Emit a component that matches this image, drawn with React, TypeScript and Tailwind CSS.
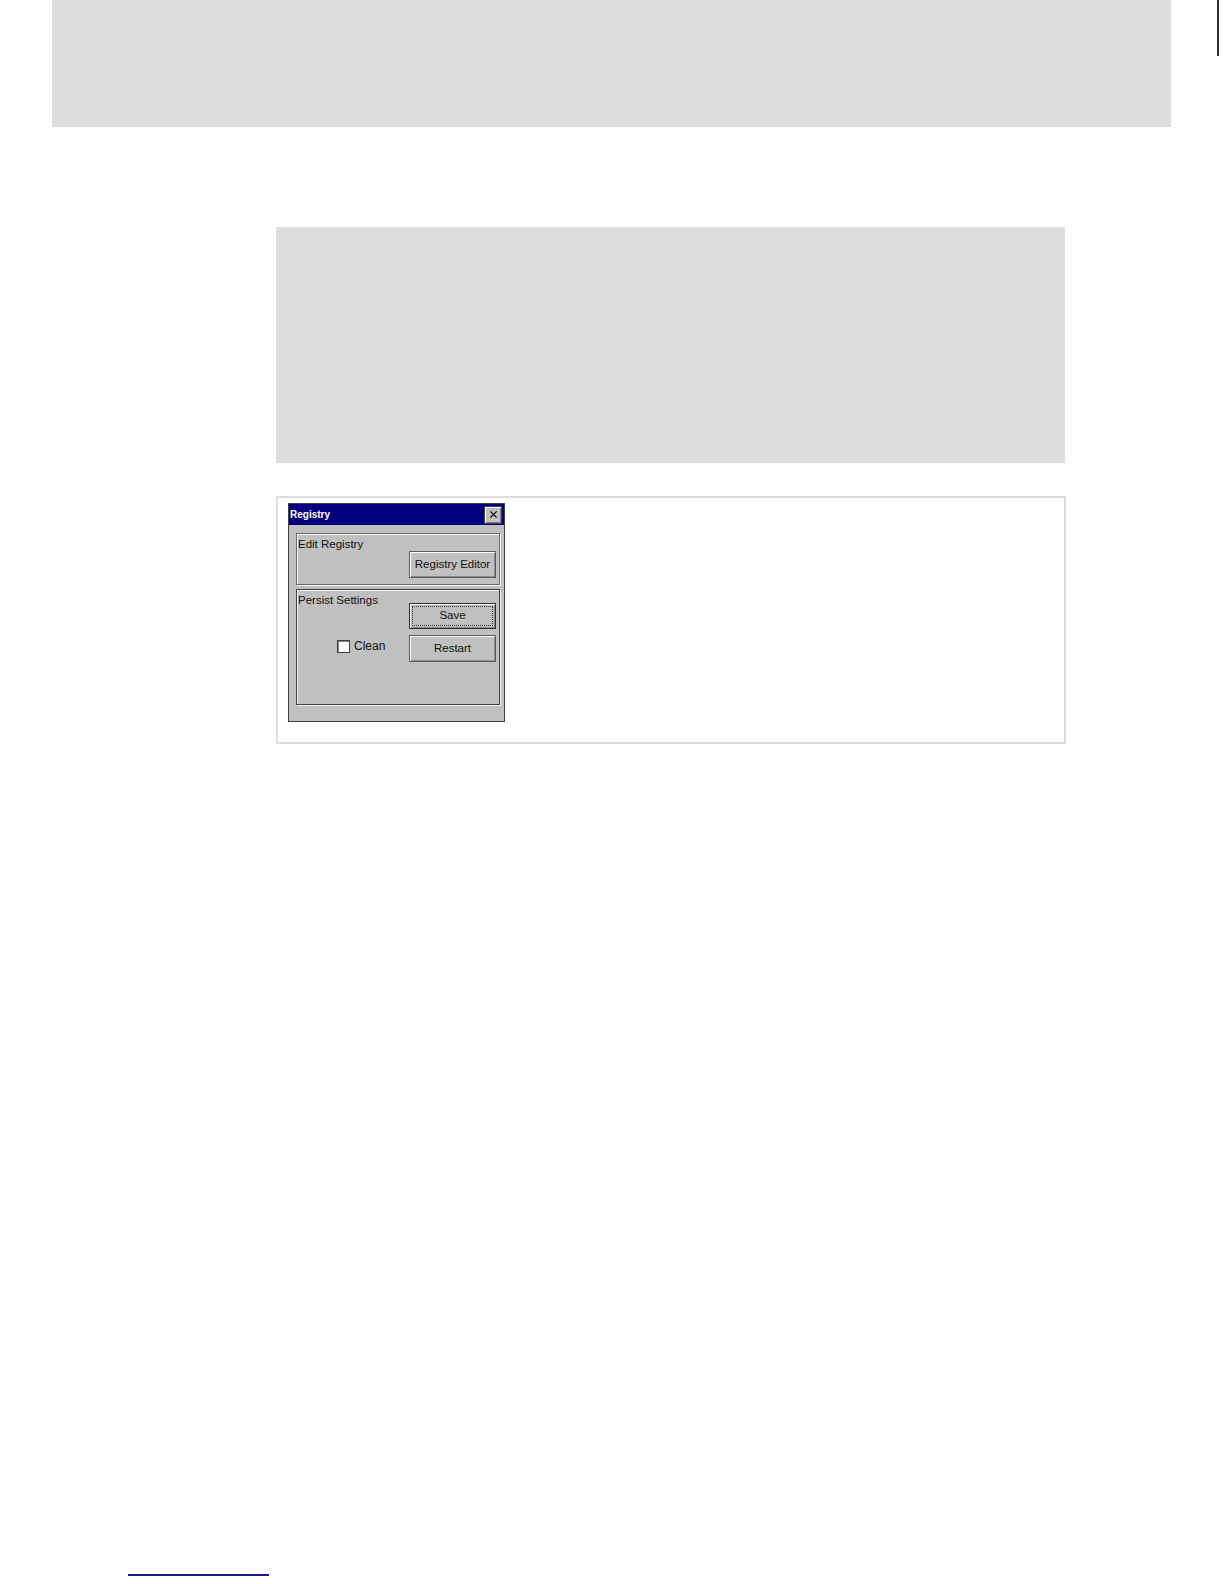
import React from "react";

const font = { fontFamily: '"Liberation Sans", Arial, sans-serif' };

function CloseGlyph() {
  return (
    <svg viewBox="0 0 10 10" className="h-[9px] w-[9px]" aria-hidden="true">
      <path d="M1.5 1.5l7 7M8.5 1.5l-7 7" stroke="#000" strokeWidth={1.4} fill="none" />
    </svg>
  );
}

function WinButton({ label, focused }: { label: string; focused?: boolean }) {
  return (
    <button
      type="button"
      className={
        "flex w-[87px] items-center justify-center bg-[#c0c0c0] p-[2px] text-[11.5px] text-[#111111] shadow-[inset_1px_1px_0_#ffffff,inset_-1px_-1px_0_#8a8a8a] " +
        (focused ? "h-[26px] border border-[#303030]" : "h-[27px] border border-[#5a5a5a]")
      }
    >
      {focused ? (
        <span className="flex h-full w-full items-center justify-center border border-dotted border-[#333333]">
          {label}
        </span>
      ) : (
        <span>{label}</span>
      )}
    </button>
  );
}

function RegistryWindow() {
  return (
    <div className="flex h-[219px] w-[217px] flex-col border border-[#404040] bg-[#c0c0c0]" style={font}>
      <div className="flex h-[21px] items-center justify-between bg-[#000080] pl-[1px] pr-[2px]">
        <span className="text-[10px] font-bold text-white">Registry</span>
        <span className="flex h-[18px] w-[18px] items-center justify-center border border-[#404040] bg-[#c0c0c0] shadow-[inset_1px_1px_0_#ffffff,inset_-1px_-1px_0_#808080]">
          <CloseGlyph />
        </span>
      </div>

      <div className="flex flex-col gap-[4px] pl-[7px] pr-[4px] pt-[8px]">
        <div className="flex h-[52px] w-[204px] flex-col border border-[#6a6a6a] shadow-[inset_1px_1px_0_#f4f4f4,1px_1px_0_#f4f4f4]">
          <span className="pl-[1px] pt-[3px] text-[11.5px] leading-[14px] text-[#111111]">Edit Registry</span>
          <div className="mr-[3px] self-end">
            <WinButton label="Registry Editor" />
          </div>
        </div>

        <div className="flex h-[116px] w-[204px] border border-[#404040] shadow-[inset_1px_1px_0_#f4f4f4,1px_1px_0_#f4f4f4]">
          <div className="flex flex-1 flex-col">
            <span className="pl-[1px] pt-[3px] text-[11.5px] leading-[14px] text-[#111111]">Persist Settings</span>
            <label className="ml-[40px] mt-[32px] flex h-[14px] items-center gap-[4px] text-[12px] text-[#111111]">
              <span className="block h-[13px] w-[13px] border border-[#404040] bg-white shadow-[inset_1px_1px_0_#808080]" />
              <span>Clean</span>
            </label>
          </div>
          <div className="mr-[3px] flex flex-col gap-[6px] pt-[13px]">
            <WinButton label="Save" focused />
            <WinButton label="Restart" />
          </div>
        </div>
      </div>
    </div>
  );
}

export default function App() {
  return (
    <div className="flex h-[1584px] w-[1224px] flex-col bg-white">
      <div className="flex items-start">
        <div className="ml-[52px] h-[127px] w-[1119px] bg-[#dddddd]" />
        <div className="ml-[46px] h-[56px] w-[2px] bg-[#333333]" />
      </div>

      <div className="ml-[276px] mt-[100px] h-[236px] w-[789px] bg-[#dddddd]" />

      <div className="ml-[276px] mt-[33px] h-[248px] w-[790px] border-2 border-[#dddddd] bg-white pl-[10px] pt-[5px]">
        <RegistryWindow />
      </div>

      <div className="ml-[128px] mt-[830px] h-[2px] w-[141px] bg-[#1a1a8a]" />
    </div>
  );
}
